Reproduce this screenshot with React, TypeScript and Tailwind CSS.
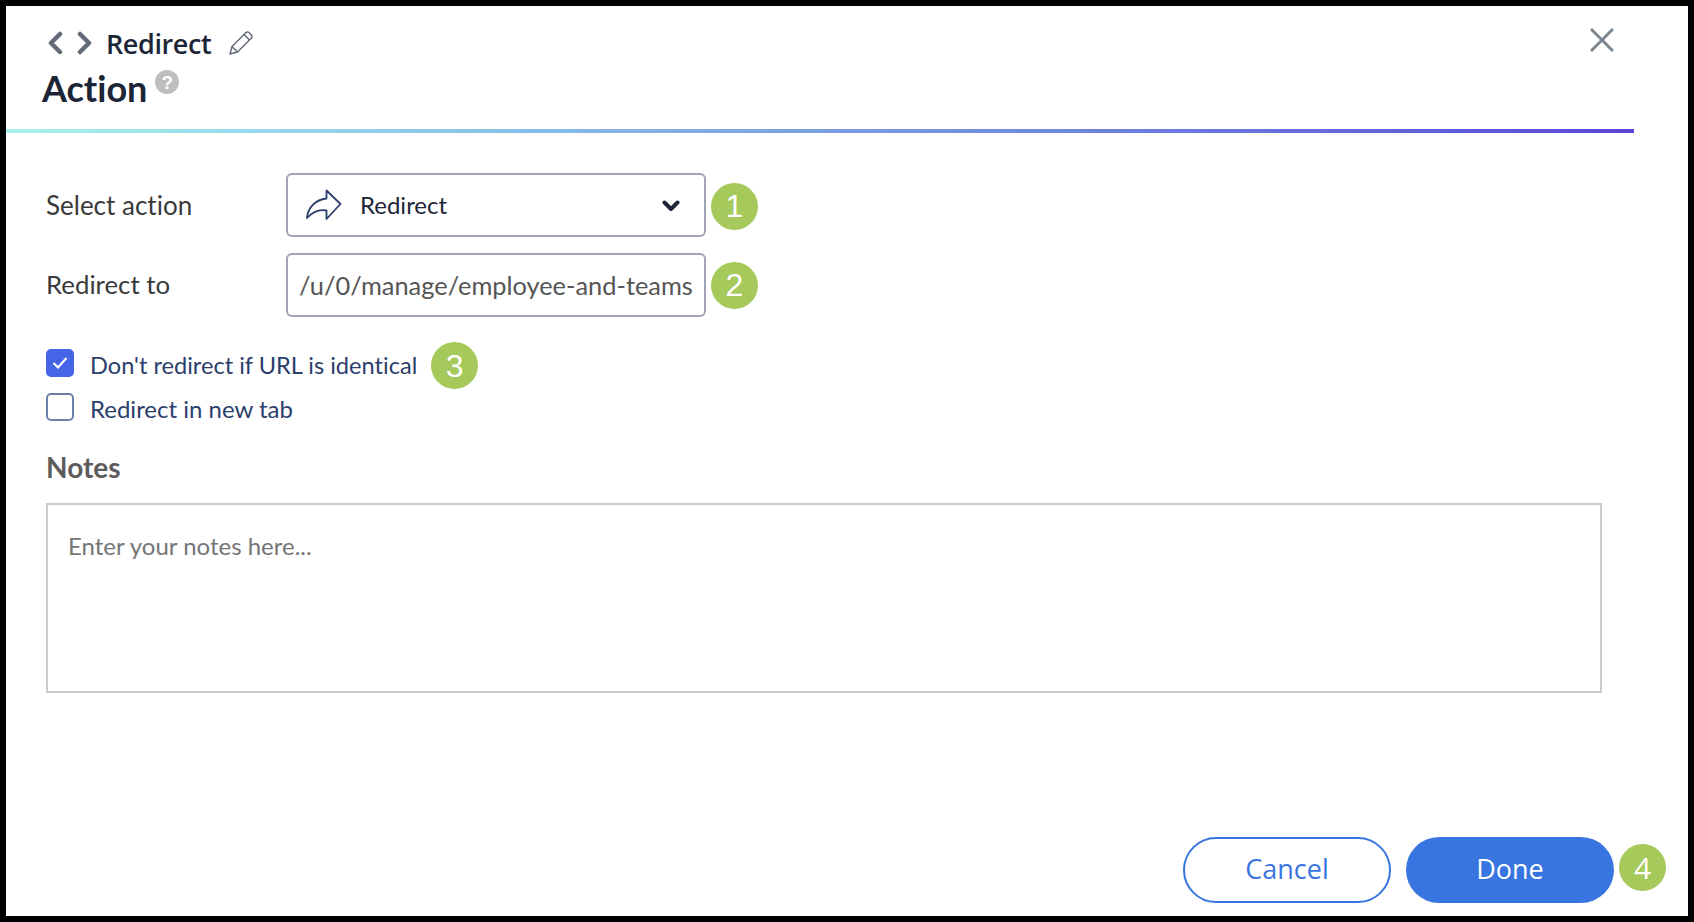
import React from "react";

function Badge({ n, className = "" }: { n: string; className?: string }) {
  return (
    <div
      className={`flex h-[47px] w-[47px] shrink-0 items-center justify-center rounded-full bg-[#a5c95a] font-['Liberation_Sans',sans-serif] text-[32px] leading-none text-white ${className}`}
    >
      {n}
    </div>
  );
}

export default function App() {
  return (
    <div className="h-[922px] w-[1694px] bg-black p-[6px] font-['Lato',sans-serif] [font-variant-ligatures:none]">
      <div className="flex h-full w-full flex-col bg-white">
        <header className="relative h-[123px] pl-[36px]">
          <div className="box-content flex h-[40px] items-center pt-[17px]">
            <svg width="16" height="24" viewBox="0 0 16 24" className="ml-[5px]" fill="none" stroke="#646b78" strokeWidth="4.5" strokeLinecap="round" strokeLinejoin="round">
              <path d="M13 3 L4 12 L13 21" />
            </svg>
            <svg width="16" height="24" viewBox="0 0 16 24" className="ml-[14px]" fill="none" stroke="#646b78" strokeWidth="4.5" strokeLinecap="round" strokeLinejoin="round">
              <path d="M3 3 L12 12 L3 21" />
            </svg>
            <span className="ml-[13px] font-['Open_Sans',sans-serif] text-[27px] font-semibold leading-none tracking-[-0.4px] text-[#1c2636]">Redirect</span>
            <svg width="26" height="26" viewBox="0 0 26 26" className="ml-[17px]" fill="none" stroke="#646b78" strokeWidth="1.5" strokeLinejoin="round">
              <path d="M2 24 L4 16.5 L18 2.5 Q19.5 1.5 21 2.5 L23.5 5 Q24.5 6.5 23.5 8 L9.5 22 Z" />
              <path d="M4 16.5 L9.5 22 M16 4.5 L21.5 10" />
            </svg>
          </div>
          <div className="mt-[3px] flex items-start">
            <span className="text-[36px] font-bold leading-[44px] text-[#1c2636]">Action</span>
            <span className="ml-[8px] mt-[4px] flex h-[24px] w-[24px] items-center justify-center rounded-full bg-[#bdbdbd] font-['Liberation_Sans',sans-serif] text-[19px] font-bold leading-none text-white">?</span>
          </div>
          <button className="absolute right-[74px] top-[22px]" aria-label="Close">
            <svg width="24" height="24" viewBox="0 0 24 24" fill="none" stroke="#7b8894" strokeWidth="3" className="block">
              <path d="M1 1 L23 23 M23 1 L1 23" />
            </svg>
          </button>
        </header>

        <div className="h-[4px] w-[1628px] bg-gradient-to-r from-[#a5f3ee] via-[#7a9fe0] to-[#5a45d6]" />

        <main className="flex flex-1 flex-col px-[40px] pt-[40px]">
          <div className="flex items-center">
            <label className="w-[240px] text-[26px] text-[#3a3a3a]">Select action</label>
            <div className="flex h-[64px] w-[420px] items-center rounded-[6px] border-2 border-[#9ea3b8] pl-[17px] pr-[24px]">
              <svg width="37" height="32" viewBox="0 0 36 32" fill="none" stroke="#2c3e6b" strokeWidth="1.8" strokeLinejoin="round">
                <path d="M21 1.5 L35 15 L21 30 L21 21.5 C13 20 7 23 1.5 29 C2 19 10 10.5 21 9.5 Z" />
              </svg>
              <span className="ml-[18px] flex-1 text-[24px] text-[#1c2636]">Redirect</span>
              <svg width="18" height="12" viewBox="0 0 18 12" className="mt-[2px]" fill="none" stroke="#1c2636" strokeWidth="4" strokeLinecap="round" strokeLinejoin="round">
                <path d="M2.5 2.5 L9 9 L15.5 2.5" />
              </svg>
            </div>
            <Badge n="1" className="ml-[5px] mt-[2px]" />
          </div>

          <div className="mt-[16px] flex items-center">
            <label className="mb-[1px] w-[240px] text-[25.8px] text-[#3a3a3a]">Redirect to</label>
            <div className="flex h-[64px] w-[420px] items-center overflow-hidden whitespace-nowrap rounded-[6px] border-2 border-[#9ea3b8] pl-[11px] text-[25.4px] text-[#555555]">
              /u/0/manage/employee-and-teams
            </div>
            <Badge n="2" className="ml-[5px]" />
          </div>

          <div className="mt-[32px] flex h-[28px] items-center">
            <div className="flex h-[28px] w-[28px] items-center justify-center rounded-[5px] bg-[#4565e6]">
              <svg width="16" height="14" viewBox="0 0 16 14" fill="none" stroke="#ffffff" strokeWidth="2.2">
                <path d="M1.5 7 L6 11.5 L14.5 2" />
              </svg>
            </div>
            <span className="ml-[16px] mt-[5px] text-[23.6px] text-[#2c3e6b]">Don't redirect if URL is identical</span>
            <Badge n="3" className="ml-[14px] mt-[5px]" />
          </div>

          <div className="mt-[16px] flex h-[28px] items-center">
            <div className="h-[28px] w-[28px] rounded-[5px] border-2 border-[#6c80ab]" />
            <span className="ml-[16px] mt-[3px] text-[24px] text-[#2c3e6b]">Redirect in new tab</span>
          </div>

          <div className="mt-[29px] text-[28px] font-bold leading-[34px] text-[#5c5c5c]">Notes</div>

          <div className="mt-[19px] h-[190px] w-[1556px] border-2 border-[#cccccc] px-[20px] pt-[25px] text-[24px] leading-[32px] text-[#757575]">
            Enter your notes here...
          </div>

          <footer className="mr-[-18px] mt-auto flex items-start justify-end pb-[13px] font-['Open_Sans',sans-serif]">
            <button className="h-[66px] w-[208px] rounded-[33px] border-2 border-[#3875e0] bg-white pb-[2px] text-[27px] text-[#3875e0]">Cancel</button>
            <button className="ml-[15px] h-[66px] w-[208px] rounded-[33px] bg-[#3875e0] pb-[2px] text-[27px] text-white">Done</button>
            <Badge n="4" className="ml-[5px] mt-[7px] font-['Open_Sans',sans-serif] !text-[30px]" />
          </footer>
        </main>
      </div>
    </div>
  );
}
